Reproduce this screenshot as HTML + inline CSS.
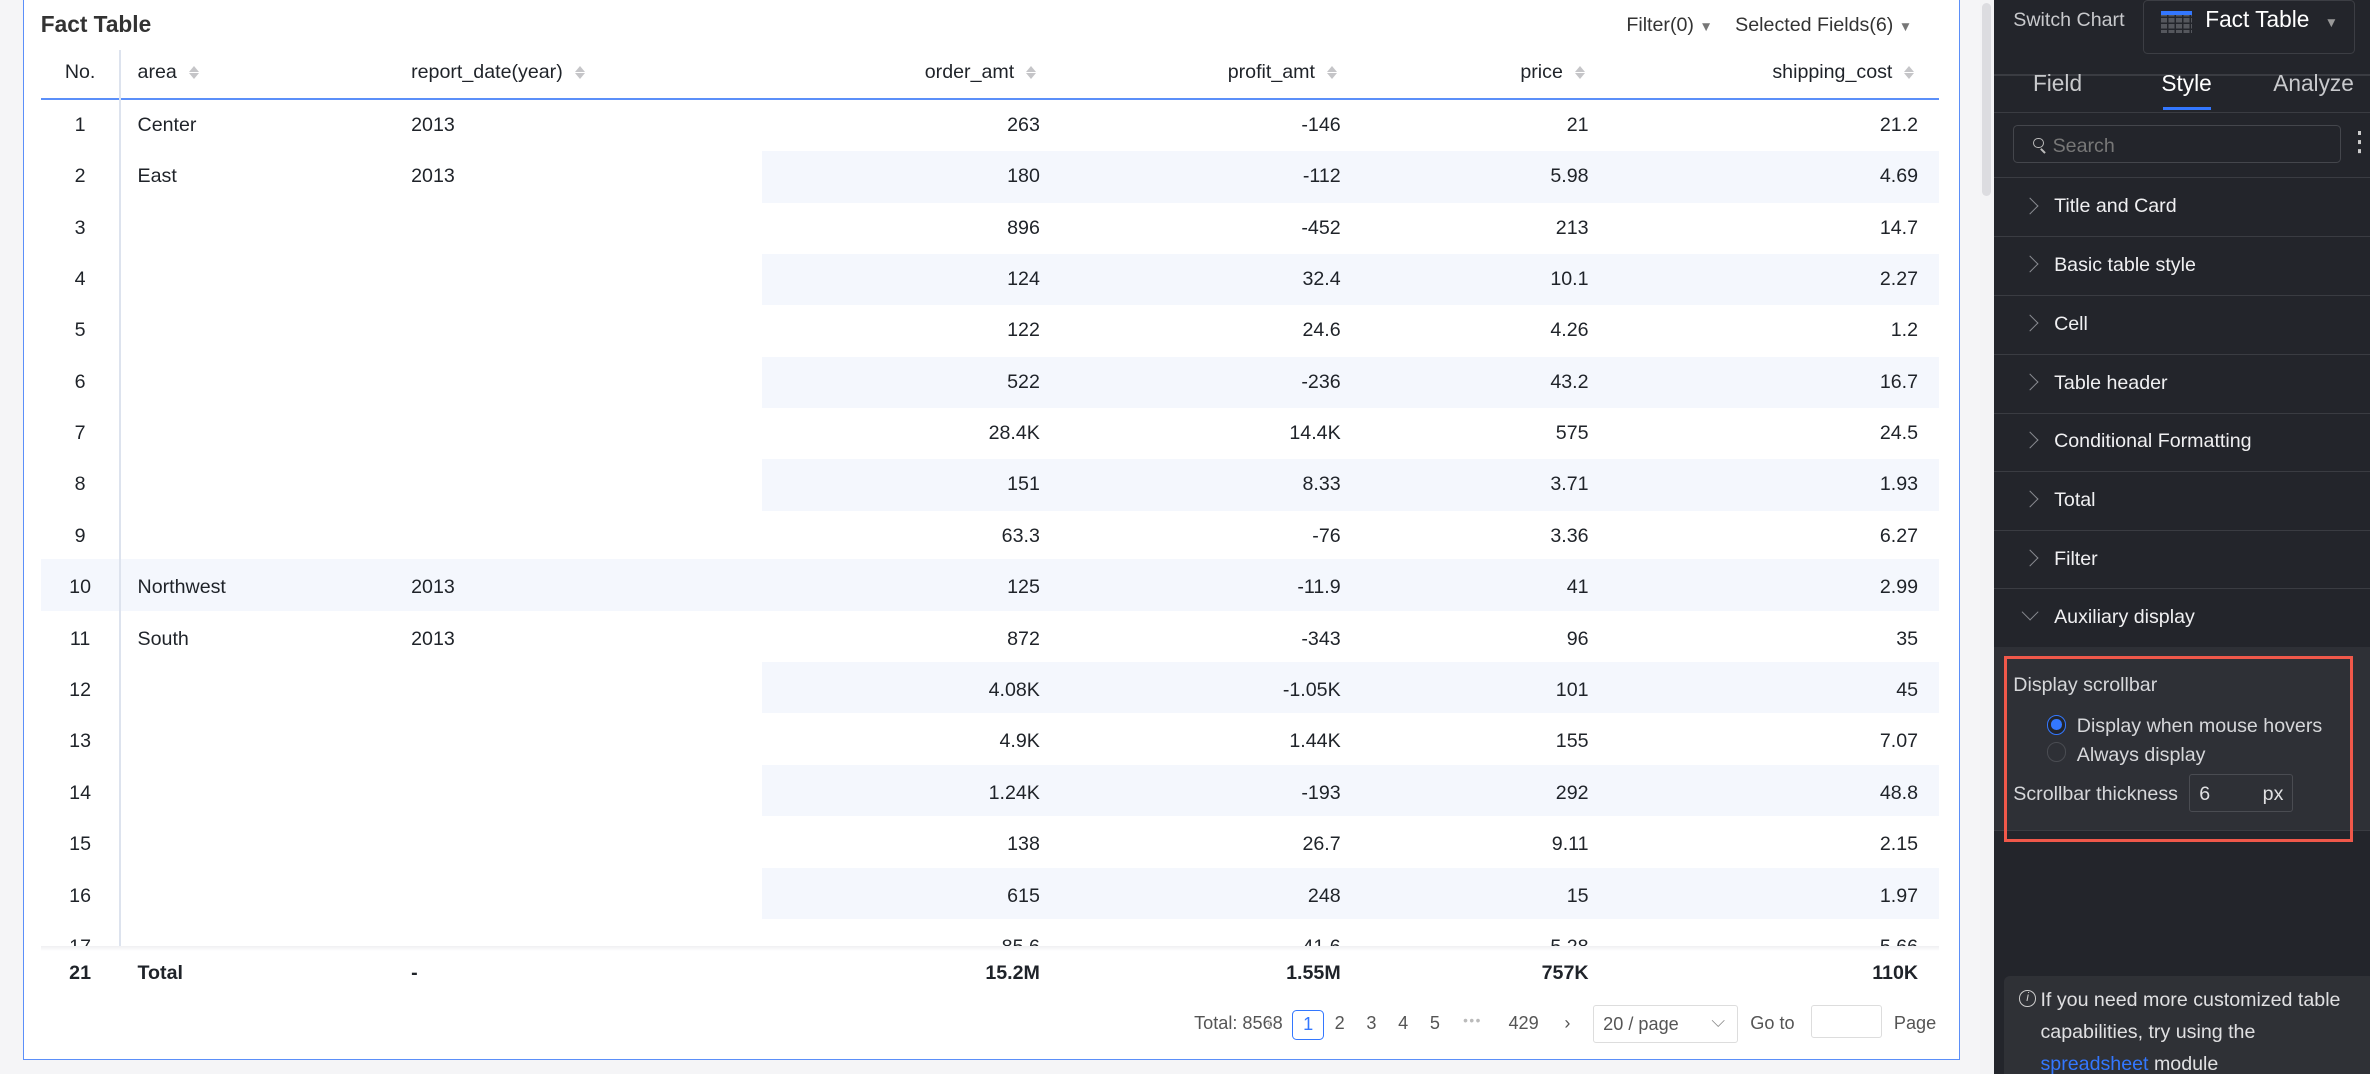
<!DOCTYPE html>
<html><head><meta charset="utf-8"><style>
*{margin:0;padding:0;box-sizing:border-box}
html,body{width:2370px;height:1074px;overflow:hidden;background:#f5f5f7}
#w{zoom:1.51148;width:1568px;height:711px;position:relative;font-family:"Liberation Sans",sans-serif;color:#1f2329;font-size:13px}
.a{position:absolute;white-space:nowrap}
.card{position:absolute;left:15px;top:-2px;width:1282px;height:703px;border:1px solid #5b8ff9;background:#fff}
.row{position:absolute;left:27px;width:1256px;height:34px}
.c{position:absolute;top:0;line-height:34px}
.r{text-align:right}
.srt{display:inline-block;width:7px;margin-left:8px;vertical-align:middle}
.srt i{display:block;width:0;height:0;border-left:3.5px solid transparent;border-right:3.5px solid transparent}
.panel{position:absolute;left:1319px;top:0;width:249px;height:711px;background:#23252b;color:#e8e9eb}
.item{position:absolute;left:0;width:249px;height:39px;border-bottom:1px solid #3a3c42;line-height:38px;padding-left:40px;font-size:13px;color:#f0f0f2}
.chev{position:absolute;left:20px;top:14px;width:8px;height:8px;border-right:1.3px solid #8a8c92;border-top:1.3px solid #8a8c92;transform:rotate(45deg)}
.pg{font-size:12px;color:#555;top:670px}
</style></head><body><div id="w">
<div class="a" style="left:1310px;top:0;width:9px;height:711px;background:#f3f3f5"></div>
<div class="a" style="left:1311px;top:2px;width:6px;height:128px;background:#dcdce0;border-radius:3px"></div>
<div class="card"></div>
<div class="a" style="left:27px;top:7px;font-size:15px;font-weight:bold;color:#333">Fact Table</div>
<div class="a" style="left:1076px;top:9px;color:#333">Filter(0) <span style="font-size:9px;color:#777">▼</span></div>
<div class="a" style="left:1148px;top:9px;color:#333">Selected Fields(6) <span style="font-size:9px;color:#777">▼</span></div>

<div class="a" style="left:79px;top:33px;width:1px;height:595px;background:#dde3ee"></div>
<div class="a" style="left:27px;top:65px;width:1256px;height:1px;background:#5b8ff9"></div>
<div class="row" style="top:31px">
<div class="c" style="left:0;width:52px;text-align:center">No.</div>
<div class="c" style="left:64px">area<span class="srt"><i style="border-bottom:4px solid #c5c5c8;margin-bottom:1px"></i><i style="border-top:4px solid #c5c5c8"></i></span></div>
<div class="c" style="left:245px">report_date(year)<span class="srt"><i style="border-bottom:4px solid #c5c5c8;margin-bottom:1px"></i><i style="border-top:4px solid #c5c5c8"></i></span></div>
<div class="c r" style="right:597px">order_amt<span class="srt"><i style="border-bottom:4px solid #c5c5c8;margin-bottom:1px"></i><i style="border-top:4px solid #c5c5c8"></i></span></div>
<div class="c r" style="right:398px">profit_amt<span class="srt"><i style="border-bottom:4px solid #c5c5c8;margin-bottom:1px"></i><i style="border-top:4px solid #c5c5c8"></i></span></div>
<div class="c r" style="right:234px">price<span class="srt"><i style="border-bottom:4px solid #c5c5c8;margin-bottom:1px"></i><i style="border-top:4px solid #c5c5c8"></i></span></div>
<div class="c r" style="right:16px">shipping_cost<span class="srt"><i style="border-bottom:4px solid #c5c5c8;margin-bottom:1px"></i><i style="border-top:4px solid #c5c5c8"></i></span></div>
</div>

<div style="position:absolute;left:0;top:0;width:1300px;height:628px;overflow:hidden">
<div class="a" style="left:504px;top:100px;width:779px;height:34px;background:#f4f7fd"></div>
<div class="a" style="left:504px;top:168px;width:779px;height:34px;background:#f4f7fd"></div>
<div class="a" style="left:504px;top:236px;width:779px;height:34px;background:#f4f7fd"></div>
<div class="a" style="left:504px;top:304px;width:779px;height:34px;background:#f4f7fd"></div>
<div class="a" style="left:27px;top:370px;width:1256px;height:34px;background:#f4f7fd"></div>
<div class="a" style="left:504px;top:438px;width:779px;height:34px;background:#f4f7fd"></div>
<div class="a" style="left:504px;top:506px;width:779px;height:34px;background:#f4f7fd"></div>
<div class="a" style="left:504px;top:574px;width:779px;height:34px;background:#f4f7fd"></div>
<div class="a" style="left:79px;top:33px;width:1px;height:595px;background:#dde3ee"></div>
<div id="rows"></div>
</div>
<div class="a" style="left:27px;top:626px;width:1256px;height:3px;background:linear-gradient(#f0f0f2,#fff)"></div>
<div class="row" style="top:627px;font-weight:bold">
<div class="c" style="left:0;width:52px;text-align:center">21</div>
<div class="c" style="left:64px">Total</div>
<div class="c" style="left:245px">-</div>
<div class="c r" style="right:595px">15.2M</div>
<div class="c r" style="right:396px">1.55M</div>
<div class="c r" style="right:232px">757K</div>
<div class="c r" style="right:14px">110K</div>
</div>
<div class="a pg" style="left:790px">Total: 8568</div>
<div class="a pg" style="left:838px;color:#ccc">‹</div>
<div class="a" style="left:855px;top:668px;width:21px;height:20px;border:1px solid #3377ff;border-radius:3px;color:#3377ff;text-align:center;line-height:18px;font-size:12px">1</div>
<div class="a pg" style="left:883px">2</div>
<div class="a pg" style="left:904px">3</div>
<div class="a pg" style="left:925px">4</div>
<div class="a pg" style="left:946px">5</div>
<div class="a" style="left:968px;top:670px;color:#bbb;font-size:9px;letter-spacing:1px">•••</div>
<div class="a pg" style="left:998px">429</div>
<div class="a pg" style="left:1035px">›</div>
<div class="a" style="left:1054px;top:665px;width:96px;height:25px;border:1px solid #ddd;border-radius:2px;color:#555;padding:5px 6px;font-size:12px">20 / page <span style="position:absolute;right:8px;top:3px;color:#888">⌵</span></div>
<div class="a pg" style="left:1158px">Go to</div>
<div class="a" style="left:1198px;top:665px;width:47px;height:22px;border:1px solid #ddd;border-radius:2px"></div>
<div class="a pg" style="left:1253px">Page</div>

<div class="panel">
<div class="a" style="left:13px;top:6px;color:#c8c9cc">Switch Chart</div>
<div class="a" style="left:99px;top:0;width:140px;height:36px;border:1px solid #3c3e44;border-radius:3px"></div>
<div class="a" style="left:111px;top:8px;width:20px;height:14px;background:repeating-linear-gradient(90deg,#55575d 0 4px,transparent 4px 5px)"></div>
<div class="a" style="left:111px;top:8px;width:20px;height:14px;background:repeating-linear-gradient(transparent 0 3px,#23252b 3px 4px)"></div>
<div class="a" style="left:111px;top:7px;width:20px;height:3px;background:#3377ff"></div>
<div class="a" style="left:140px;top:4px;font-size:15px;color:#fff">Fact Table</div>
<div class="a" style="left:219px;top:10px;font-size:9px;color:#999">▼</div>
<div class="a" style="left:0;top:49px;width:249px;height:1px;background:#3a3c42"></div>
<div class="a" style="left:26px;top:46px;font-size:15px;color:#c8c9cc">Field</div>
<div class="a" style="left:111px;top:46px;font-size:15px;color:#fff">Style</div>
<div class="a" style="left:112px;top:71px;width:32px;height:2px;background:#3377ff"></div>
<div class="a" style="left:185px;top:46px;font-size:15px;color:#c8c9cc">Analyze</div>
<div class="a" style="left:0;top:74px;width:249px;height:1px;background:#3a3c42"></div>
<div class="a" style="left:13px;top:83px;width:217px;height:25px;border:1px solid #44464c;border-radius:3px"></div>
<div class="a" style="left:26px;top:91px;width:7px;height:7px;border:1.2px solid #bbb;border-radius:50%"></div>
<div class="a" style="left:31px;top:99px;width:4px;height:1.2px;background:#bbb;transform:rotate(45deg)"></div>
<div class="a" style="left:39px;top:89px;color:#777">Search</div>
<div class="a" style="left:241px;top:87px;width:2px;height:2px;background:#ccc;box-shadow:0 6px #ccc,0 12px #ccc"></div>
<div class="a" style="left:0;top:117px;width:249px;height:1px;background:#3a3c42"></div>
<div class="item" style="top:118px"><span class="chev"></span>Title and Card</div>
<div class="item" style="top:157px"><span class="chev"></span>Basic table style</div>
<div class="item" style="top:196px"><span class="chev"></span>Cell</div>
<div class="item" style="top:235px"><span class="chev"></span>Table header</div>
<div class="item" style="top:273px"><span class="chev"></span>Conditional Formatting</div>
<div class="item" style="top:312px"><span class="chev"></span>Total</div>
<div class="item" style="top:351px"><span class="chev"></span>Filter</div>
<div class="item" style="top:390px;border-bottom:none"><span class="chev" style="transform:rotate(135deg);top:11px"></span>Auxiliary display</div>
<div class="a" style="left:0;top:428px;width:249px;height:122px;background:#2e3036;border-bottom:1px solid #3a3c42"></div>
<div class="a" style="left:7px;top:434px;width:231px;height:123px;border:2px solid #f0584a"></div>
<div class="a" style="left:13px;top:446px;color:#d6d7da">Display scrollbar</div>
<div class="a" style="left:35px;top:473px;width:13px;height:13px;border-radius:50%;border:1px solid #3377ff;background:#23252b"></div>
<div class="a" style="left:38px;top:476px;width:7px;height:7px;border-radius:50%;background:#3377ff"></div>
<div class="a" style="left:55px;top:473px;color:#d6d7da">Display when mouse hovers</div>
<div class="a" style="left:35px;top:491px;width:13px;height:13px;border-radius:50%;border:1px solid #4a4c52"></div>
<div class="a" style="left:55px;top:492px;color:#d6d7da">Always display</div>
<div class="a" style="left:13px;top:518px;color:#d6d7da">Scrollbar thickness</div>
<div class="a" style="left:129px;top:512px;width:69px;height:25px;border:1px solid #4a4c52;border-radius:2px"></div>
<div class="a" style="left:136px;top:518px;color:#e0e0e2">6</div>
<div class="a" style="left:178px;top:518px;color:#e0e0e2">px</div>
<div class="a" style="left:7px;top:646px;width:245px;height:70px;background:#2f3136;border-radius:4px"></div>
<div class="a" style="left:17px;top:655px;width:11px;height:11px;border:1px solid #ccc;border-radius:50%;font-size:8px;line-height:9px;text-align:center;color:#ccc;font-style:italic">i</div>
<div class="a" style="left:31px;top:652px;color:#e0e0e2;line-height:21px">If you need more customized table<br>capabilities, try using the<br><span style="color:#3377ff">spreadsheet</span> module</div>
</div>
</div>
<script>
var d=[["1","Center","2013","263","-146","21","21.2"],["2","East","2013","180","-112","5.98","4.69"],["3","","","896","-452","213","14.7"],["4","","","124","32.4","10.1","2.27"],["5","","","122","24.6","4.26","1.2"],["6","","","522","-236","43.2","16.7"],["7","","","28.4K","14.4K","575","24.5"],["8","","","151","8.33","3.71","1.93"],["9","","","63.3","-76","3.36","6.27"],["10","Northwest","2013","125","-11.9","41","2.99"],["11","South","2013","872","-343","96","35"],["12","","","4.08K","-1.05K","101","45"],["13","","","4.9K","1.44K","155","7.07"],["14","","","1.24K","-193","292","48.8"],["15","","","138","26.7","9.11","2.15"],["16","","","615","248","15","1.97"],["17","","","85.6","-41.6","5.28","5.66"]];
var h="";d.forEach(function(r,i){h+='<div class="row" style="top:'+(66+i*34)+'px"><div class="c" style="left:0;width:52px;text-align:center">'+r[0]+'</div><div class="c" style="left:64px">'+r[1]+'</div><div class="c" style="left:245px">'+r[2]+'</div><div class="c r" style="right:595px">'+r[3]+'</div><div class="c r" style="right:396px">'+r[4]+'</div><div class="c r" style="right:232px">'+r[5]+'</div><div class="c r" style="right:14px">'+r[6]+'</div></div>';});
document.getElementById("rows").innerHTML=h;
</script>
</body></html>
